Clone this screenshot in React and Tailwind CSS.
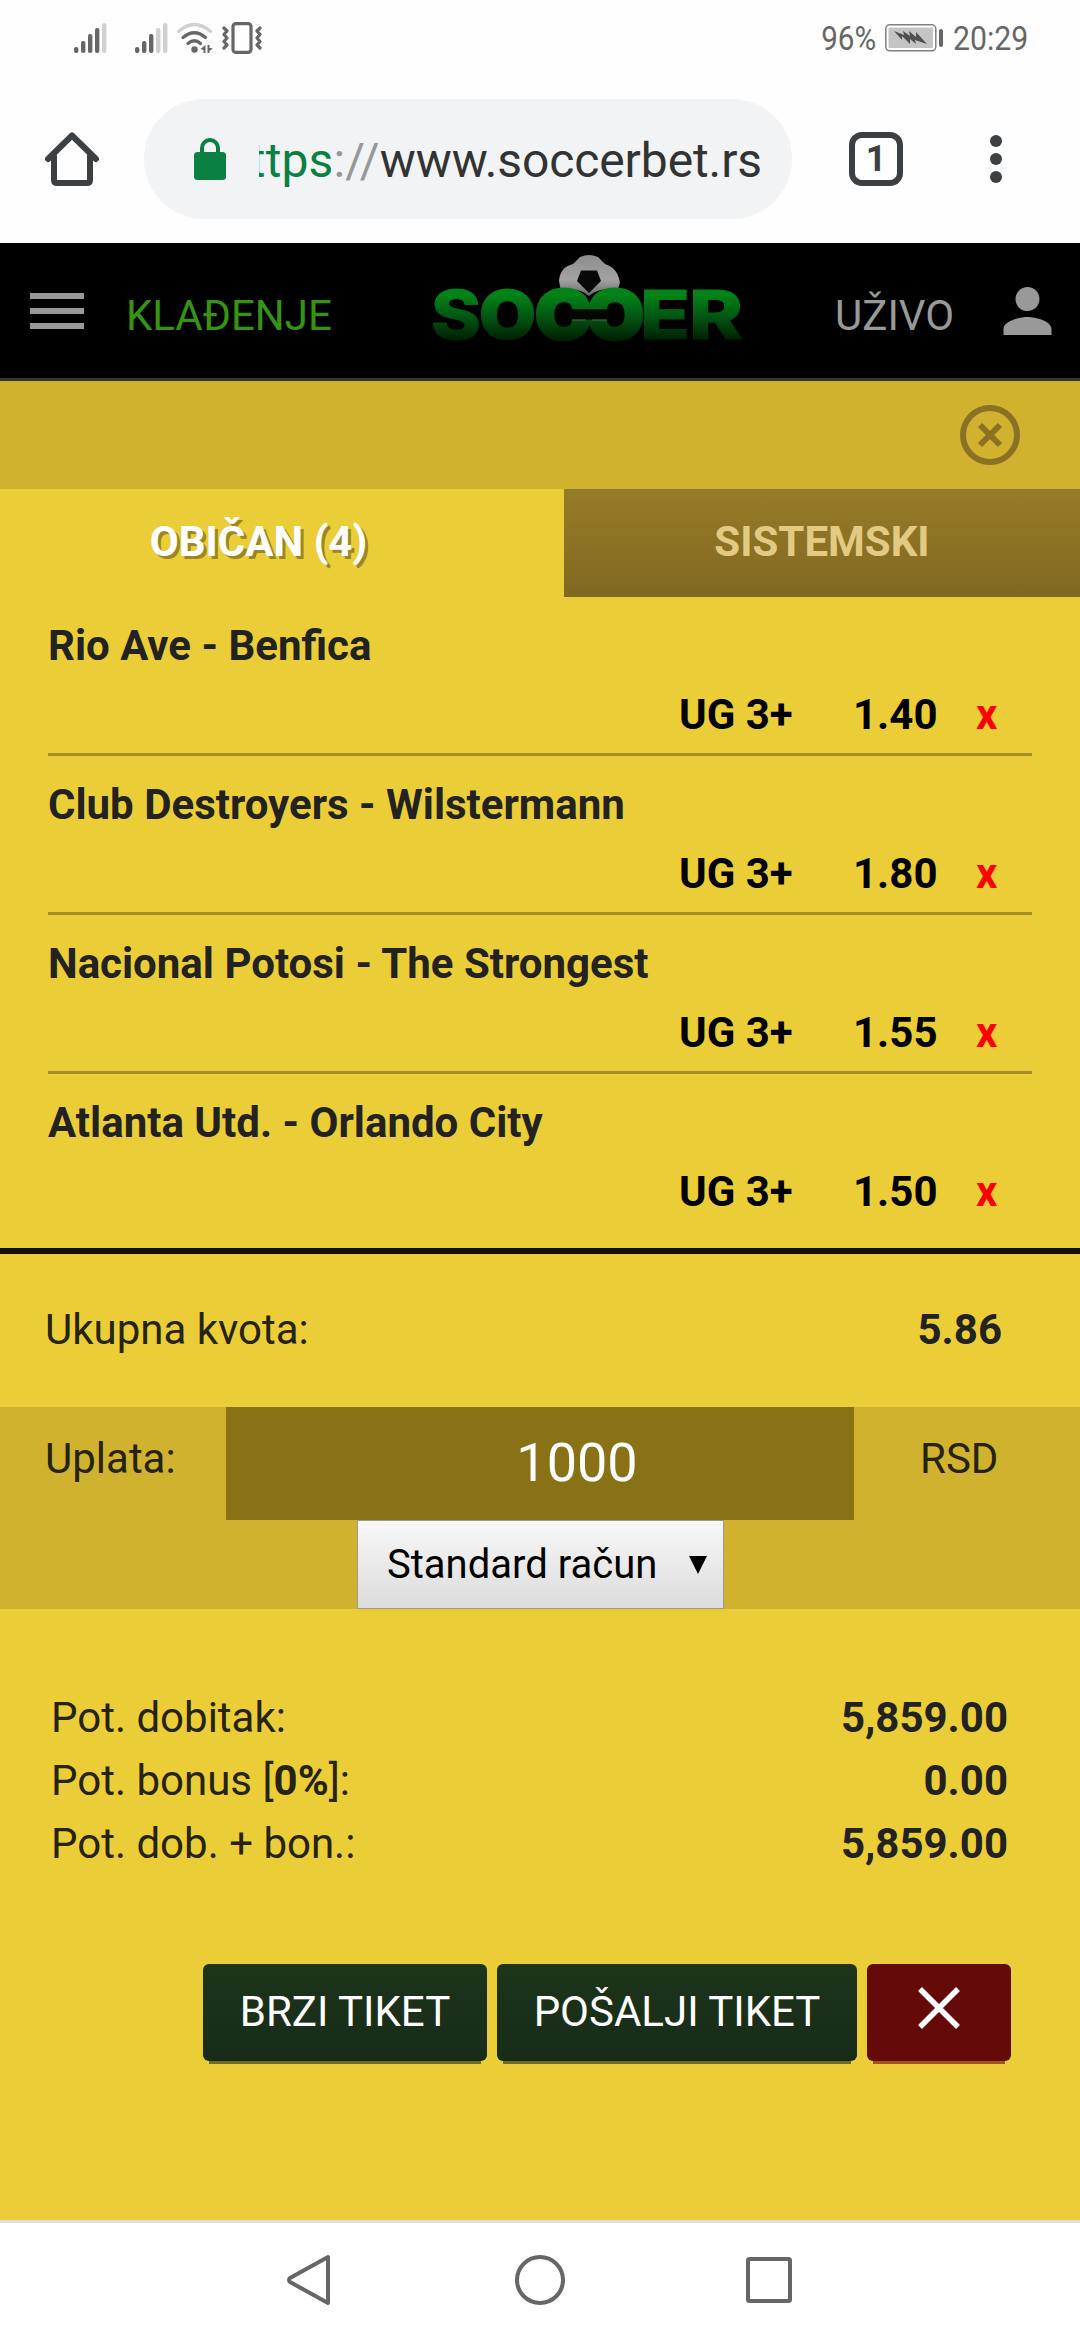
import React from 'react';

const matches = [
  { name: 'Rio Ave - Benfica', tip: 'UG 3+', odds: '1.40' },
  { name: 'Club Destroyers - Wilstermann', tip: 'UG 3+', odds: '1.80' },
  { name: 'Nacional Potosi - The Strongest', tip: 'UG 3+', odds: '1.55' },
  { name: 'Atlanta Utd. - Orlando City', tip: 'UG 3+', odds: '1.50' }
];

const totals = [
  { label: 'Pot. dobitak:', value: '5,859.00' },
  { label: <>Pot. bonus [<b>0%</b>]:</>, value: '0.00' },
  { label: 'Pot. dob. + bon.:', value: '5,859.00' }
];

const Signal = ({ active }) => (
  <svg width="34" height="32" viewBox="0 0 34 32">
    {[25, 19, 12, 6, 1].map((top, idx) => (
      <rect key={top} x={idx * 7} y={top} width="4.4" height={31 - top} rx="2" fill={idx < active ? '#666' : '#d0d0d0'} />
    ))}
  </svg>
);

const Wifi = () => (
  <svg width="38" height="32" viewBox="0 0 38 32" fill="none" strokeWidth="3.2" strokeLinecap="round">
    <path d="M2.500 9.500Q18.500-4.500 34.500 9.500" stroke="#d0d0d0" />
    <path d="M7 15.500Q18.500 6 29.500 15.500M12 21.500Q18.500 16 24.500 21.500" stroke="#666" />
    <circle cx="18.500" cy="27.500" r="3.200" fill="#666" />
    <path d="M29.500 23v8h-2v-3l-3-1zM31.500 31v-8h2v3l3 0q-1 2-3 3v2z" fill="#666" />
  </svg>
);

const Vibrate = () => (
  <svg width="42" height="32" viewBox="0 0 42 32" fill="none" stroke="#666" strokeWidth="3.2">
    <rect x="12" y="1.600" width="18" height="28.800" rx="3" />
    <path d="M3 6l3 3-3 3.500 3 3.500-3 3.500 3 3.500-3 3M39 6l-3 3 3 3.500-3 3.500 3 3.500-3 3.500 3 3" strokeLinejoin="round" strokeLinecap="round" />
  </svg>
);

const Battery = () => (
  <svg width="59" height="28" viewBox="0 0 59 28">
    <rect x="0.800" y="0.800" width="50" height="26" rx="4" fill="#fff" stroke="#808080" strokeWidth="1.500" />
    <rect x="3.500" y="3.500" width="44.500" height="20.500" rx="1" fill="#c4c4c4" />
    <path d="M9 7l10 4-1-4 7 5-1-5 7 6v-5l11 12-12-4 1 4-6-5 0 5-8-8 0 4z" fill="#505050" />
    <rect x="54" y="5" width="4" height="18" rx="2" fill="#666" />
  </svg>
);

const StatusBar = () => (
  <div className="h-[75px] pl-[74px] pr-[51px] flex items-center justify-between text-[#666]">
    <div className="flex items-center">
      <Signal active={4} />
      <div className="ml-[27px] flex items-center"><Signal active={3} /></div>
      <div className="ml-[7px] flex"><Wifi /></div>
      <div className="ml-[7px] flex"><Vibrate /></div>
    </div>
    <div className="flex items-center text-[34px] leading-[40px]">
      <span className="w-[56px] flex justify-end whitespace-nowrap"><span className="origin-right scale-x-[.87]">96%</span></span>
      <div className="ml-[9px] flex"><Battery /></div>
      <span className="ml-[9px] w-[76px] flex whitespace-nowrap"><span className="origin-left scale-x-[.89]">20:29</span></span>
    </div>
  </div>
);

const BrowserBar = () => (
  <div className="h-[168px] pt-6 pl-[45px] flex items-start">
    <svg className="mt-[33px]" width="54" height="54" viewBox="0 0 54 54" fill="none" stroke="#3c4043" strokeWidth="6" strokeLinecap="round" strokeLinejoin="round">
      <path d="M3 27L27 3.500 51 27" />
      <path d="M9 24v24q0 3 3 3h30q3 0 3-3V24" />
    </svg>
    <div className="ml-[45px] w-[648px] h-[120px] rounded-full bg-[#f1f3f5] pl-[50px] flex items-center">
      <svg width="32" height="42" viewBox="0 0 32 42">
        <path d="M8 16V10a8 8 0 0 1 16 0v6" fill="none" stroke="#0b8043" strokeWidth="4" />
        <rect y="14" width="32" height="28" rx="3.500" fill="#0b8043" />
      </svg>
      <div className="ml-[33px] mt-1 w-[503px] overflow-hidden flex justify-end text-[48px] leading-[60px] tracking-[0.1px] whitespace-nowrap text-[#333]">
        <span><span className="text-[#0b8043]">https</span><span className="text-[#969799]">://</span><span className="tracking-[-0.1px]">www.soccerbet.rs</span></span>
      </div>
    </div>
    <div className="ml-[57px] mt-[33px] w-[54px] h-[54px] rounded-[13px] border-[6px] border-[#3c4043] flex items-center justify-center text-[36px] leading-[42px] font-bold text-[#3c4043]">1</div>
    <div className="ml-[87px] mt-[36px] flex flex-col gap-[6px]">
      <i className="size-3 rounded-full bg-[#3c4043]" />
      <i className="size-3 rounded-full bg-[#3c4043]" />
      <i className="size-3 rounded-full bg-[#3c4043]" />
    </div>
  </div>
);

const Logo = () => (
  <svg className="overflow-visible" width="314" height="112" viewBox="0 0 314 112" fontFamily="Inter, sans-serif" fontWeight="900" fontSize="68">
    <defs>
      <linearGradient id="green" gradientUnits="userSpaceOnUse" x1="0" y1="34" x2="0" y2="90">
        <stop offset="0.150" stopColor="#038318" />
        <stop offset="0.550" stopColor="#025312" />
        <stop offset="0.950" stopColor="#001f02" />
      </linearGradient>
      <linearGradient id="ball" x1="0" y1="0" x2="0" y2="1">
        <stop offset="0" stopColor="#8d8d8d" />
        <stop offset="0.600" stopColor="#a3a3a3" />
        <stop offset="1" stopColor="#6b666b" />
      </linearGradient>
    </defs>
    <path d="M128 28Q129 14 142 11L149 4Q158 0 167 4L174 11Q187 15 189 30L186 38Q170 33 158 43Q146 33 130 38z" fill="url(#ball)" />
    <path d="M150 17.500h16l4 10.500-12 12-12-12z" fill="#080808" />
    <g fill="url(#green)" stroke="url(#green)" strokeWidth="1">
      <text x="0" y="86" textLength="50" lengthAdjust="spacingAndGlyphs" fontWeight="800">S</text>
      <text x="48" y="86" textLength="57" lengthAdjust="spacingAndGlyphs">O</text>
      <text x="104" y="86" textLength="56" lengthAdjust="spacingAndGlyphs" strokeWidth="3">C</text>
      <g transform="translate(317 0) scale(-1 1)">
        <text x="104" y="86" textLength="56" lengthAdjust="spacingAndGlyphs" strokeWidth="3">C</text>
      </g>
      <text x="209" y="86" textLength="50" lengthAdjust="spacingAndGlyphs" fontWeight="800">E</text>
      <text x="258" y="86" textLength="54" lengthAdjust="spacingAndGlyphs" fontWeight="800">R</text>
    </g>
    <path d="M138 57h40v9h-40z" fill="#030803" />
    <path d="M141 67h14M161 67h15" stroke="#59625a" strokeWidth="1.200" />
  </svg>
);

const SiteHeader = () => (
  <div className="h-[138px] bg-black border-b-[3px] border-[#38352f] pl-[30px] pr-[16px] flex items-start text-[42px] leading-[48px]">
    <div className="mt-[50px] flex flex-col gap-[9px]">
      <i className="w-[54px] h-[6px] bg-[#999]" />
      <i className="w-[54px] h-[6px] bg-[#999]" />
      <i className="w-[54px] h-[6px] bg-[#999]" />
    </div>
    <span className="ml-[42px] mt-[49px] w-[208px] text-[#359512]">KLAĐENJE</span>
    <div className="ml-[97px] mt-[10px]"><Logo /></div>
    <span className="ml-[90px] mt-[49px] w-[120px] text-[#999]">UŽIVO</span>
    <svg className="ml-auto mt-[32px]" width="73" height="72" viewBox="0 0 24 24" fill="#999">
      <path d="M12 12c2.210 0 4-1.790 4-4s-1.790-4-4-4-4 1.790-4 4 1.790 4 4 4zm0 2c-2.670 0-8 1.340-8 4v2h16v-2c0-2.660-5.330-4-8-4z" />
    </svg>
  </div>
);

const Tabs = () => (
  <div className="h-[108px] flex text-[42px] leading-[48px] font-bold">
    <div className="w-[564px] pt-[29px] pr-[47px] text-center text-white [text-shadow:3px_3px_0_#9c8624]">OBIČAN (4)</div>
    <div className="flex-1 pt-[29px] text-center text-[#e2ca84] bg-linear-to-b from-[#967c27] to-[#806822]">SISTEMSKI</div>
  </div>
);

const MatchRow = ({ match, last }) => (
  <div className={`mx-12 pt-[25px] ${last ? 'pb-8' : 'pb-[14px] border-b-[3px] border-[#a68e26]'}`}>
    <p className="font-bold text-[#222220]">{match.name}</p>
    <div className="mt-[21px] flex font-bold text-black">
      <span className="ml-[631px] w-[174px]">{match.tip}</span>
      <span className="w-[123px]">{match.odds}</span>
      <span className="text-[#f00]">x</span>
    </div>
  </div>
);

const Payment = () => (
  <div className="h-[202px] bg-[#d0b22f]">
    <div className="h-[113px] flex text-[#26230f]">
      <span className="w-[226px] pl-[45px] pt-[28px]">Uplata:</span>
      <div className="w-[628px] pl-[74px] pt-[24px] bg-[#897116] text-center text-[54px] leading-[64px] text-white">1000</div>
      <span className="ml-[66px] pt-[28px]">RSD</span>
    </div>
    <div className="ml-[357px] w-[367px] h-[89px] pl-[29px] pr-[16px] flex items-center justify-between border border-[#999] bg-linear-to-b from-[#f8f8f8] to-[#dcdcdc] text-[40px] leading-[48px] text-black">
      <span className="whitespace-nowrap">Standard račun</span>
      <svg width="18" height="18" viewBox="0 0 18 18"><path d="M0 0h18L9 18z" /></svg>
    </div>
  </div>
);

const Actions = () => (
  <div className="mt-[89px] ml-[203px] flex gap-[10px] text-white text-center leading-[48px]">
    <div className="w-[284px] h-[97px] pt-6 rounded-md bg-linear-to-b from-[#1c351b] to-[#182b17] relative">
      BRZI TIKET
      <i className="absolute left-[6px] right-[6px] top-full h-[3px] bg-[#6c6d24]" />
    </div>
    <div className="w-[360px] h-[97px] pt-6 rounded-md bg-linear-to-b from-[#1c351b] to-[#182b17] relative">
      POŠALJI TIKET
      <i className="absolute left-[6px] right-[6px] top-full h-[3px] bg-[#6c6d24]" />
    </div>
    <div className="w-[144px] h-[97px] pt-[22px] flex justify-center rounded-md bg-[#640b0a] relative">
      <svg width="44" height="44" viewBox="0 0 44 44" stroke="#fff" strokeWidth="5.500"><path d="M3 3l38 38M41 3L3 41" /></svg>
      <i className="absolute left-[6px] right-[6px] top-full h-[3px] bg-[#a0551f]" />
    </div>
  </div>
);

const NavBar = () => (
  <div className="h-[120px] border-t-[3px] border-[#e0dfde] pl-[285px] pt-[31px] flex items-start bg-white">
    <svg width="510" height="52" viewBox="0 0 510 52" fill="none" stroke="#666" strokeWidth="4" strokeLinejoin="round">
      <path d="M43 3v46L5 28q-2-2 0-4z" />
      <circle cx="255" cy="26" r="23" />
      <rect x="463" y="5" width="42" height="42" rx="1.500" />
    </svg>
  </div>
);

export default function App() {
  return (
    <div className="w-[1080px] h-[2340px] overflow-hidden flex flex-col bg-[#fefefe] font-[Roboto,sans-serif]">
      <StatusBar />
      <BrowserBar />
      <SiteHeader />
      <div className="flex-1 bg-[#ebce37] text-[42px] leading-[48px] text-[#26230f]">
        <div className="h-[108px] bg-[#d0b22f] pt-6 pr-[60px] flex justify-end">
          <svg width="60" height="60" viewBox="0 0 60 60" fill="none" stroke="#8a7124" strokeWidth="6">
            <circle cx="30" cy="30" r="27" />
            <path d="M20 20l20 20M40 20L20 40" />
          </svg>
        </div>
        <Tabs />
        {matches.map((match, idx) => (
          <MatchRow key={match.name} match={match} last={idx === matches.length - 1} />
        ))}
        <div className="h-[159px] border-t-[6px] border-[#111] pt-[52px] pl-[45px] pr-[78px] flex justify-between">
          <span>Ukupna kvota:</span>
          <b className="text-[#222220]">5.86</b>
        </div>
        <Payment />
        <div className="pt-[77px] pl-[51px] pr-[72px] leading-[63px]">
          {totals.map((row, idx) => (
            <div key={idx} className="flex justify-between">
              <span>{row.label}</span>
              <b className="text-[#222220]">{row.value}</b>
            </div>
          ))}
        </div>
        <Actions />
      </div>
      <NavBar />
    </div>
  );
}
